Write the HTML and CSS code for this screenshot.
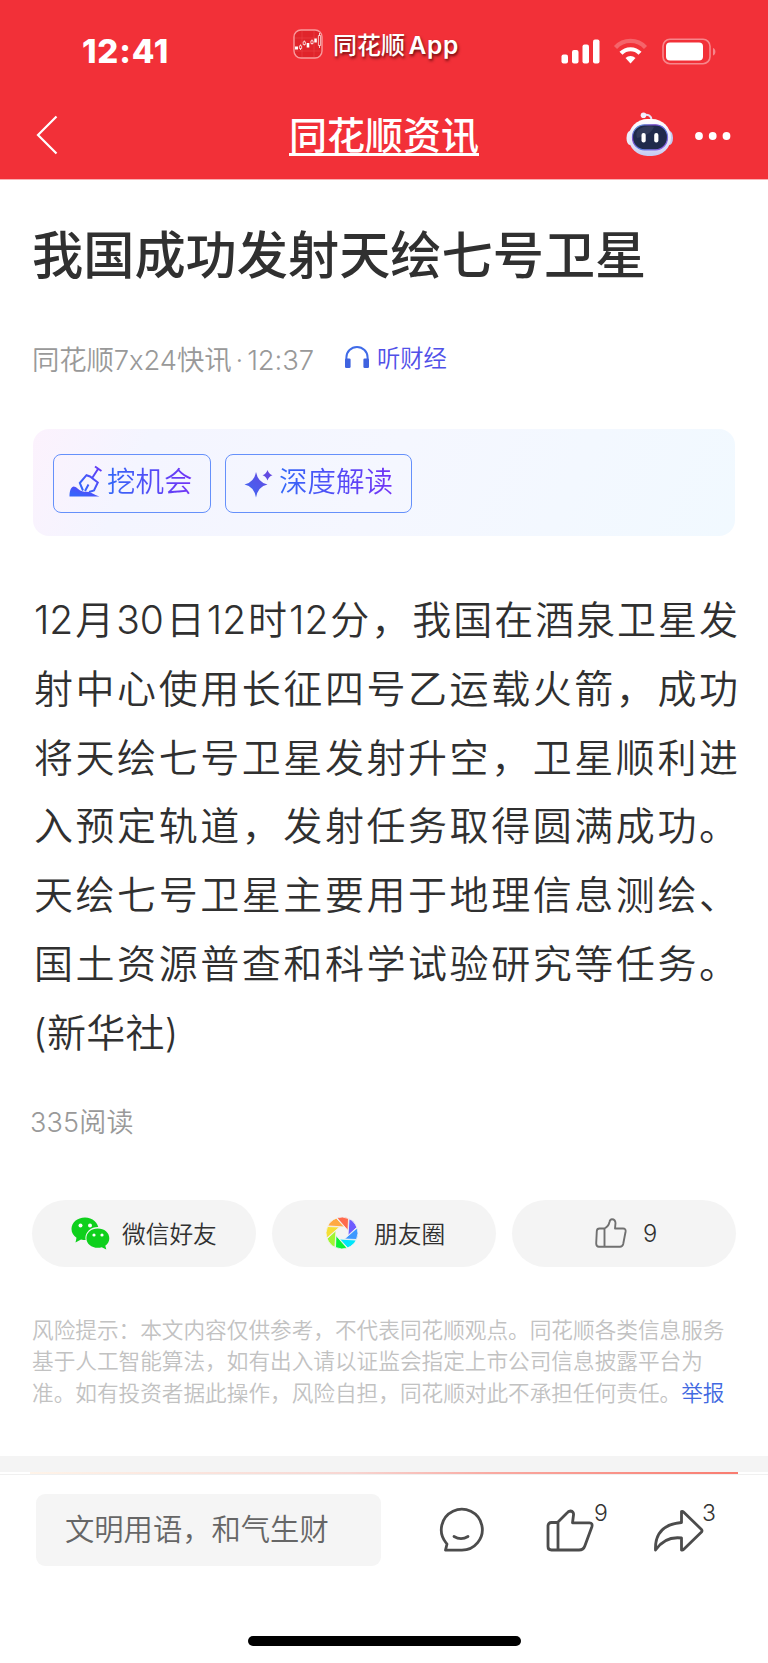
FILE: index.html
```html
<!DOCTYPE html>
<html lang="zh-CN">
<head>
<meta charset="utf-8">
<title>同花顺资讯</title>
<link rel="stylesheet" href="styles.css">
</head>
<body>
<header class="top">
  <div class="status">
    <div class="clock">12:41</div>
    <div class="app-tag">
      <svg width="30" height="30" viewBox="0 0 30 30"><rect x="1" y="1" width="28" height="28" rx="7" fill="#e0242b" stroke="#f99a9c" stroke-width="1.4"/><path d="M2 9H28M2 22H28M9 2V28M21 2V28" stroke="#ec4a4e" stroke-width=".5"/><g stroke="#fff" stroke-width=".8" fill="none"><path d="M7.500 15.500v5.500M11.300 11.500v5M19 10.500v5M26.500 4v15"/></g><path d="M2 17.500h3v3H2zM13.700 14h2.600v4.500h-2.600zM21.300 9.500h2.500v4h-2.500z" fill="#fff"/><path d="M6.400 16.800h2.200v2.700H6.400zM10.200 12.800h2.200v2.700h-2.200zM17.900 11.800h2.200v2.700h-2.200zM25.400 6.500h2.200v10h-2.200z" fill="#e0242b" stroke="#fff" stroke-width=".7"/></svg>
      <span class="tag-name">同花顺 <b>App</b></span>
    </div>
    <svg class="signals" width="156" height="28" viewBox="0 0 156 28"><g fill="#fff"><rect x="0.500" y="16.500" width="6.500" height="9" rx="2"/><rect x="11" y="12" width="6.500" height="13.500" rx="2"/><rect x="21.500" y="6.500" width="6.500" height="19" rx="2"/><rect x="32" y="1.500" width="6.500" height="24" rx="2"/></g><g fill="none" stroke="#fff" stroke-width="4.200"><path d="M54.500 9.500a20.500 20.500 0 0 1 30 0" opacity=".25"/><path d="M60 15.300a13.200 13.200 0 0 1 19 0"/></g><path d="M64.500 20a7.500 7.500 0 0 1 10 0L69.500 25.500z" fill="#fff"/><rect x="102" y="1.300" width="47" height="24.400" rx="7" fill="none" stroke="#fff" stroke-opacity=".42" stroke-width="1.600"/><rect x="105" y="4.500" width="37" height="18" rx="4" fill="#fff"/><path d="M152 10c3.200 1 3.200 6.500 0 7.500z" fill="#fff" opacity=".42"/></svg>
  </div>
  <div class="nav">
    <svg width="24" height="42" viewBox="0 0 24 42"><path d="M21.500 2.500 3 21 21.500 39.500" fill="none" stroke="#fff" stroke-width="2.200"/></svg>
    <a class="brand">同花顺资讯</a>
    <svg class="nav-tools" width="106" height="46" viewBox="0 0 106 46">
      <defs><linearGradient id="shell" x1="0" y1="0" x2="0" y2="1"><stop offset="0" stop-color="#fff"/><stop offset=".6" stop-color="#eae7f8"/><stop offset="1" stop-color="#c3caf4"/></linearGradient><linearGradient id="rim" x1="0" y1="0" x2="1" y2="1"><stop offset="0" stop-color="#4dbbe2"/><stop offset=".3" stop-color="#7c48cf"/><stop offset=".6" stop-color="#5b7fe0"/><stop offset="1" stop-color="#9b4fe0"/></linearGradient></defs>
      <path d="M17.500 3c5-1 8 1 8 5" fill="none" stroke="#e6e2f7" stroke-width="2"/><circle cx="17.500" cy="3.300" r="2.800" fill="#f3f0ff"/>
      <ellipse cx="4" cy="26" rx="3.500" ry="7" fill="#eceefb"/><ellipse cx="43.500" cy="26" rx="3.500" ry="7" fill="#c3caf0"/>
      <rect x="2.500" y="7" width="42.500" height="37" rx="19" fill="url(#shell)"/>
      <rect x="6.500" y="12.800" width="35" height="25" rx="12" fill="#202a4b" stroke="url(#rim)" stroke-width="1.200"/>
      <path d="M12 18c6-5 14-4 16-3-2 5-8 9-17 11-1-3-1-6 1-8z" fill="#fff" opacity=".08"/>
      <rect x="15.500" y="21" width="4.200" height="9.500" rx="2" fill="#fff"/><rect x="28.200" y="21" width="4.200" height="9.500" rx="2" fill="#fff"/>
      <g fill="#fff"><circle cx="73" cy="24" r="3.900"/><circle cx="86.700" cy="24" r="3.900"/><circle cx="100.500" cy="24" r="3.900"/></g>
    </svg>
  </div>
</header>

<main class="article">
  <h1>我国成功发射天绘七号卫星</h1>
  <div class="meta">
    <span class="source">同花顺7x24快讯<i>·</i>12:37</span>
    <svg width="26" height="24" viewBox="0 0 26 24"><path d="M2.400 16v-3.500a10.600 10.600 0 0 1 21.200 0V16" fill="none" stroke="#3f6be8" stroke-width="2"/><rect x="1" y="13.500" width="5.600" height="9.500" rx="1.300" fill="#3f63e0"/><rect x="19.400" y="13.500" width="5.600" height="9.500" rx="1.300" fill="#3f63e0"/></svg>
    <span class="listen">听财经</span>
  </div>
  <section class="ai">
    <button class="chip dig">
      <svg width="33" height="33" viewBox="0 0 33 33"><defs><linearGradient id="dg" x1="0" y1="1" x2="1" y2="0"><stop offset=".2" stop-color="#3764fb"/><stop offset="1" stop-color="#6a35f5"/></linearGradient></defs><path d="M.5 31.500c0-5 1-9 4-10 3 0 4.500 3 8 4.500 4 1.500 7 0 10 2 3 1.500 5 2.500 8 3.500z" fill="url(#dg)"/><path d="M14 25.500 10.800 18 17.500 10.200 21 11.500 28.800 17.500 25 25.500 20 27M16 26l3.500-6.500M23.500 12.500 29 4M26 1.500l6.500 4.500" fill="none" stroke="url(#dg)" stroke-width="2"/></svg>
      <span>挖机会</span>
    </button>
    <button class="chip deep">
      <svg width="29" height="29" viewBox="0 0 29 29"><defs><linearGradient id="sg" x1="0" y1="1" x2="1" y2="0"><stop stop-color="#3d69f5"/><stop offset="1" stop-color="#6a44dd"/></linearGradient></defs><path d="M12 3Q14 13.500 23.500 15.500 14 17.500 12 28.500 10 17.500 .5 15.500 10 13.500 12 3zM23.500 1Q24.700 5 28.500 6.200 24.700 7.500 23.500 11.500 22.300 7.500 18.500 6.200 22.300 5 23.500 1z" fill="url(#sg)"/></svg>
      <span>深度解读</span>
    </button>
  </section>
  <div class="story">
    <p>12月30日12时12分，我国在酒泉卫星发</p>
    <p>射中心使用长征四号乙运载火箭，成功</p>
    <p>将天绘七号卫星发射升空，卫星顺利进</p>
    <p>入预定轨道，发射任务取得圆满成功。</p>
    <p>天绘七号卫星主要用于地理信息测绘、</p>
    <p>国土资源普查和科学试验研究等任务。</p>
    <p class="end">(新华社)</p>
  </div>
  <div class="reads">335阅读</div>
  <div class="share">
    <button class="pill">
      <svg class="wechat" width="39" height="33" viewBox="0 0 39 33"><path d="M14 .5C6.300 .5 .5 5.500 .5 12c0 3.700 2 6.700 5 8.700L4.500 25.500l5.500-3c1.500.4 3 .5 4.500.5 7 0 13-5 13-11S21.500.5 14 .5z" fill="#0ed01c"/><ellipse cx="26.800" cy="21" rx="12.400" ry="11" fill="#f4f4f4"/><path d="M26.800 11.500c-6.500 0-11.400 4.200-11.400 9.700s5 9.600 11.400 9.600c1.300 0 2.700-.2 4-.6l4.500 2.300-1-3.700c2.600-1.800 4-4.500 4-7.600 0-5.500-5-9.700-11.500-9.700z" fill="#0ed01c"/><g fill="#fff"><circle cx="9.500" cy="8.500" r="2"/><circle cx="19" cy="8.500" r="2"/><circle cx="23" cy="18" r="1.600"/><circle cx="31" cy="18" r="1.600"/></g></svg>
      <span>微信好友</span>
    </button>
    <button class="pill moments">
      <svg width="34" height="34" viewBox="0 0 34 34"><g stroke="#f4f4f4" stroke-width=".8"><path d="M12 2 Q17 -.2 23.500 2.500L23 14.500Z" fill="#ff6a4d"/><path d="M12 2 Q17 -.2 23.500 2.500L23 14.500Z" fill="#6e5cff" transform="rotate(45 17 17)"/><path d="M12 2 Q17 -.2 23.500 2.500L23 14.500Z" fill="#3d98ff" transform="rotate(90 17 17)"/><path d="M12 2 Q17 -.2 23.500 2.500L23 14.500Z" fill="#00e5fa" transform="rotate(135 17 17)"/><path d="M12 2 Q17 -.2 23.500 2.500L23 14.500Z" fill="#08f235" transform="rotate(180 17 17)"/><path d="M12 2 Q17 -.2 23.500 2.500L23 14.500Z" fill="#a0f531" transform="rotate(225 17 17)"/><path d="M12 2 Q17 -.2 23.500 2.500L23 14.500Z" fill="#f5df35" transform="rotate(270 17 17)"/><path d="M12 2 Q17 -.2 23.500 2.500L23 14.500Z" fill="#ffa942" transform="rotate(315 17 17)"/></g><circle cx="17" cy="17" r="6" fill="#f4f4f4"/></svg>
      <span>朋友圈</span>
    </button>
    <button class="pill like">
      <svg width="32" height="30" viewBox="0 0 32 30"><path d="M9.500 10.500H4.500Q2 10.500 1.800 13L1.200 25.500Q1.200 28.700 4 28.700H25Q27.500 28.700 28.200 26L30.600 13.500Q31 10.500 28 10.500H20L20.500 5Q20.300 1.200 17 1.200 15 1.200 14.500 4 13.500 8.500 9.500 10.500V28.500" fill="none" stroke="#707070" stroke-width="1.900" stroke-linejoin="round"/></svg>
      <span>9</span>
    </button>
  </div>
  <div class="risk">
    <p>风险提示：本文内容仅供参考，不代表同花顺观点。同花顺各类信息服务</p>
    <p>基于人工智能算法，如有出入请以证监会指定上市公司信息披露平台为</p>
    <p>准。如有投资者据此操作，风险自担，同花顺对此不承担任何责任。<a>举报</a></p>
  </div>
</main>
<div class="band"></div>
<footer class="bar">
  <div class="progress"></div>
  <div class="tools">
    <div class="input">文明用语，和气生财</div>
    <svg class="t-comment" width="46" height="46" viewBox="0 0 46 46"><path d="M7.500 44.200H23.500A20.500 20.500 0 1 0 7.800 36.500L9 38Z" fill="none" stroke="#4c4c4c" stroke-width="2.800" stroke-linejoin="round"/><path d="M16 30.500q7 4.200 14 0" fill="none" stroke="#4c4c4c" stroke-width="2.800" stroke-linecap="round"/></svg>
    <div class="t-like">
      <svg width="48" height="43" viewBox="0 0 48 43"><path d="M12 13.500H5.500Q2 13.500 2 17V37.500Q2 41 5.500 41H33Q37.500 41 38.800 37L45.800 18Q47 13.800 43.500 13.800H26.500L27.500 6Q28 2.500 24.500 2 22.500 2 20.500 4.500L12 13V41" fill="none" stroke="#4c4c4c" stroke-width="2.800" stroke-linejoin="round"/></svg>
      <span>9</span>
    </div>
    <div class="t-share">
      <svg width="51" height="43" viewBox="0 0 51 43"><path d="M28.500 2.500Q29.500 2 30.500 3L48.500 20.500Q49.500 21.800 48.500 23L30.500 40.500Q29.500 41.500 28.500 41V29Q12 27 2.500 41 1.500 16 28.500 13.500Z" fill="none" stroke="#4c4c4c" stroke-width="2.800" stroke-linejoin="round"/></svg>
      <span>3</span>
    </div>
  </div>
  <div class="home"></div>
</footer>
</body>
</html>
```
FILE: styles.css
```css
* { box-sizing: border-box; }
body { margin: 0; width: 768px; height: 1663px; background: #fff; color: #303030; font-family: Inter, "Noto Sans CJK SC", sans-serif; overflow: hidden; }
svg { display: block; flex: none; }
h1, p { margin: 0; }
button { border: 0; padding: 0; background: none; font: inherit; color: inherit; }

.top { height: 180px; background: #f23038; background-clip: padding-box; color: #fff; border-bottom: 1px solid #f9b0b3; }
.status { display: flex; height: 90px; }
.clock { width: 293px; padding: 31px 0 0 82px; font-size: 33px; line-height: 40px; font-weight: 800; letter-spacing: .8px; }
.app-tag { display: flex; gap: 10px; width: 268px; padding-top: 29px; font-size: 24px; line-height: 32px; font-weight: 500; white-space: nowrap; }
.tag-name { word-spacing: -3px; text-shadow: 1px 2px 3px rgba(60, 0, 0, .75); }
.tag-name b { font-weight: 600; font-size: 24.500px; letter-spacing: .8px; }
.signals { margin-top: 38px; }
.nav { display: flex; padding: 22px 0 0 35px; }
.nav > svg:first-child { margin-top: 2px; }
.brand { margin: 2px 0 0 230px; height: 42px; border-bottom: 3px solid #fff; font-size: 38px; line-height: 43px; font-weight: 500; white-space: nowrap; }
.nav-tools { margin-left: 147px; }

.article { height: 1276px; padding: 43px 32px 0; }
h1 { height: 64px; font-size: 51.200px; line-height: 64px; font-weight: 500; white-space: nowrap; }
.meta { display: flex; align-items: center; height: 40px; margin-top: 51px; white-space: nowrap; }
.source { width: 312px; font-size: 27.400px; letter-spacing: -.1px; color: #999; font-weight: 350; }
.source i { font-style: normal; margin: 0 4px; }
.listen { margin-left: 7px; font-size: 23.300px; font-weight: 350; color: #5050e8; }
.meta svg, .listen { position: relative; top: -1px; }

.ai { display: flex; gap: 14px; width: 702px; height: 107px; margin: 51px 0 0 1px; padding: 25px 20px; border-radius: 16px; background: linear-gradient(115deg, #fcf2fd 0, #f4f5ff 16%, #f5f7ff 50%, #f1f9ff 100%); }
.chip { display: flex; height: 59px; border: 1.500px solid #6590fb; border-radius: 8px; font-size: 28.500px; line-height: 54px; font-weight: 350; white-space: nowrap; }
.chip span { background: linear-gradient(90deg, #3268f8, #7332f6); background-clip: text; -webkit-background-clip: text; color: transparent; }
.dig { width: 158px; padding-left: 15px; }
.dig svg { margin: 10px 5px 0 0; }
.deep { width: 187px; padding-left: 18px; }
.deep svg { margin: 14px 6px 0 0; }

.story { width: 704px; margin: 50px 0 0 2px; font-size: 39px; line-height: 68.800px; font-weight: 350; }
.story p { height: 68.800px; white-space: nowrap; text-align: justify; text-align-last: justify; }
.story .end { margin-left: -1px; text-align-last: left; letter-spacing: .3px; }
.reads { margin: 34px 0 0 -2px; font-size: 27px; letter-spacing: .2px; line-height: 42px; height: 40px; font-weight: 350; color: #999; }

.share { display: flex; gap: 16px; margin-top: 58px; }
.pill { display: flex; align-items: center; width: 224px; height: 67px; border-radius: 34px; background: #f4f4f4; padding-left: 39px; font-size: 23.700px; font-weight: 350; white-space: nowrap; }
.pill span { margin-left: 12px; }
.moments { padding-left: 53px; }
.moments span { margin-left: 15px; }
.like { padding-left: 83px; }
.like span { margin-left: 16px; }
.risk { margin-top: 48px; font-size: 21.650px; line-height: 31.500px; font-weight: 350; color: #c2c2c2; white-space: nowrap; }
.risk a { color: #4169e1; font-weight: 350; }

.band { height: 16px; background: #f4f4f4; }
.bar { height: 191px; }
.progress { height: 3px; border-bottom: 1px solid #f0f0f0; background: linear-gradient(90deg, #fef3e8, #f7d6d2 45%, #f9aaa2 65%, #f97c70) 30px 0 / 708px 2px no-repeat; }
.tools { display: flex; align-items: flex-start; padding: 19px 0 0 36px; height: 161px; }
.input { width: 345px; height: 72px; padding-left: 29px; border-radius: 9px; background: #f5f5f5; color: #666; font-size: 29.300px; line-height: 72px; font-weight: 350; white-space: nowrap; }
.t-comment { margin: 12px 0 0 57px; }
.t-like, .t-share { display: flex; color: #333; font-size: 23px; line-height: 26px; font-weight: 300; }
.t-like { margin: 6px 0 0 62px; width: 107px; }
.t-share { margin: 6px 0 0 0; }
.t-share span { margin-left: -2px; }
.t-like svg, .t-share svg { margin-top: 9px; }
.home { width: 273px; height: 10px; margin-left: 248px; border-radius: 5px; background: #000; }
```
